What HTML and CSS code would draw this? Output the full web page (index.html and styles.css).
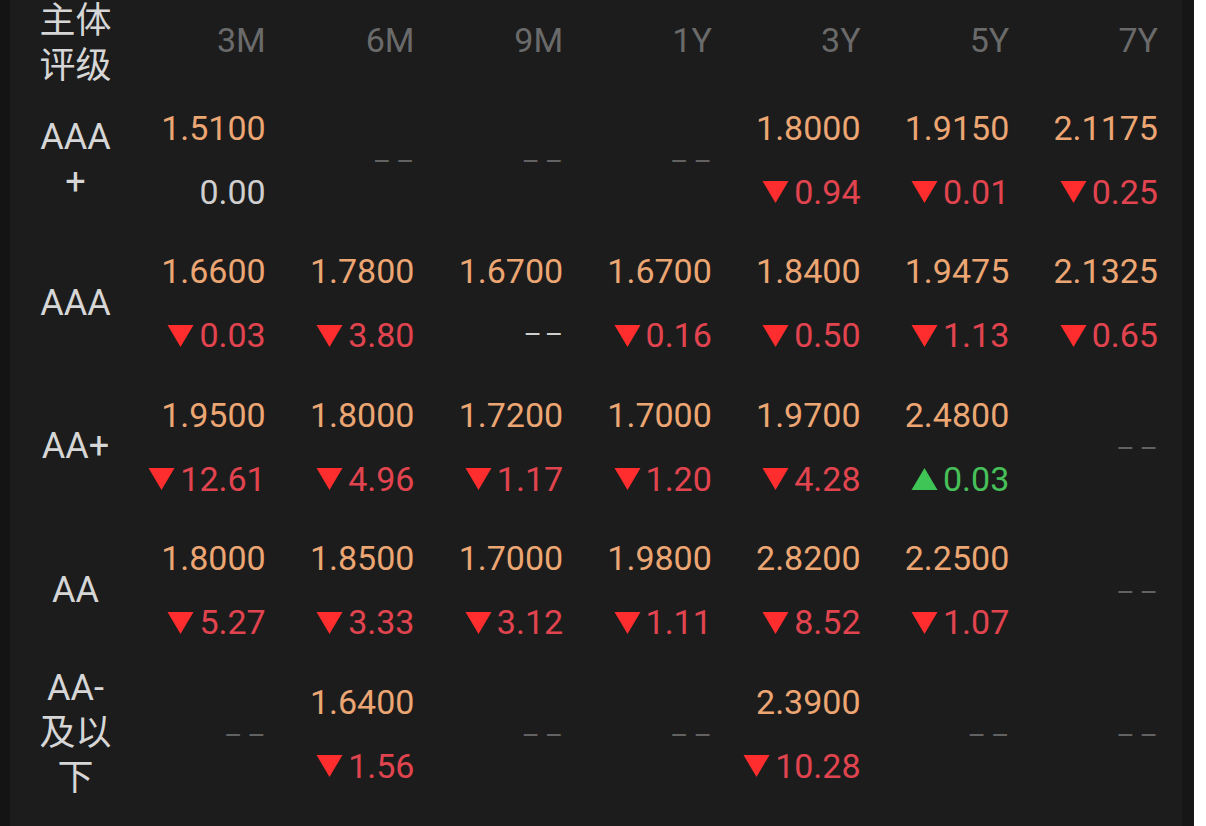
FILE: index.html
```html
<!DOCTYPE html>
<html lang="zh">
<head>
<meta charset="utf-8">
<title>主体评级收益率</title>
<link rel="stylesheet" href="styles.css">
</head>
<body>
<div class="page">
  <div class="edge-left"></div>
  <div class="panel">
    <div class="table">
      <div class="label head-label"><span>主体</span><span>评级</span></div>
      <div class="head">3M</div>
      <div class="head">6M</div>
      <div class="head">9M</div>
      <div class="head">1Y</div>
      <div class="head">3Y</div>
      <div class="head">5Y</div>
      <div class="head">7Y</div>

      <!-- AAA+ -->
      <div class="label"><span>AAA</span><span>+</span></div>
      <div class="cell"><span class="val">1.5100</span><span class="chg flat">0.00</span></div>
      <div class="cell"><span class="dash">––</span></div>
      <div class="cell"><span class="dash">––</span></div>
      <div class="cell"><span class="dash">––</span></div>
      <div class="cell"><span class="val">1.8000</span><span class="chg down"><svg class="tri" viewBox="0 0 26 22"><polygon points="0,0 26,0 13,22"/></svg>0.94</span></div>
      <div class="cell"><span class="val">1.9150</span><span class="chg down"><svg class="tri" viewBox="0 0 26 22"><polygon points="0,0 26,0 13,22"/></svg>0.01</span></div>
      <div class="cell"><span class="val">2.1175</span><span class="chg down"><svg class="tri" viewBox="0 0 26 22"><polygon points="0,0 26,0 13,22"/></svg>0.25</span></div>

      <!-- AAA -->
      <div class="label"><span>AAA</span></div>
      <div class="cell"><span class="val">1.6600</span><span class="chg down"><svg class="tri" viewBox="0 0 26 22"><polygon points="0,0 26,0 13,22"/></svg>0.03</span></div>
      <div class="cell"><span class="val">1.7800</span><span class="chg down"><svg class="tri" viewBox="0 0 26 22"><polygon points="0,0 26,0 13,22"/></svg>3.80</span></div>
      <div class="cell"><span class="val">1.6700</span><span class="chg nil"><span class="dash light">––</span></span></div>
      <div class="cell"><span class="val">1.6700</span><span class="chg down"><svg class="tri" viewBox="0 0 26 22"><polygon points="0,0 26,0 13,22"/></svg>0.16</span></div>
      <div class="cell"><span class="val">1.8400</span><span class="chg down"><svg class="tri" viewBox="0 0 26 22"><polygon points="0,0 26,0 13,22"/></svg>0.50</span></div>
      <div class="cell"><span class="val">1.9475</span><span class="chg down"><svg class="tri" viewBox="0 0 26 22"><polygon points="0,0 26,0 13,22"/></svg>1.13</span></div>
      <div class="cell"><span class="val">2.1325</span><span class="chg down"><svg class="tri" viewBox="0 0 26 22"><polygon points="0,0 26,0 13,22"/></svg>0.65</span></div>

      <!-- AA+ -->
      <div class="label"><span>AA+</span></div>
      <div class="cell"><span class="val">1.9500</span><span class="chg down"><svg class="tri" viewBox="0 0 26 22"><polygon points="0,0 26,0 13,22"/></svg>12.61</span></div>
      <div class="cell"><span class="val">1.8000</span><span class="chg down"><svg class="tri" viewBox="0 0 26 22"><polygon points="0,0 26,0 13,22"/></svg>4.96</span></div>
      <div class="cell"><span class="val">1.7200</span><span class="chg down"><svg class="tri" viewBox="0 0 26 22"><polygon points="0,0 26,0 13,22"/></svg>1.17</span></div>
      <div class="cell"><span class="val">1.7000</span><span class="chg down"><svg class="tri" viewBox="0 0 26 22"><polygon points="0,0 26,0 13,22"/></svg>1.20</span></div>
      <div class="cell"><span class="val">1.9700</span><span class="chg down"><svg class="tri" viewBox="0 0 26 22"><polygon points="0,0 26,0 13,22"/></svg>4.28</span></div>
      <div class="cell"><span class="val">2.4800</span><span class="chg up"><svg class="tri" viewBox="0 0 26 22"><polygon points="0,22 26,22 13,0"/></svg>0.03</span></div>
      <div class="cell"><span class="dash">––</span></div>

      <!-- AA -->
      <div class="label"><span>AA</span></div>
      <div class="cell"><span class="val">1.8000</span><span class="chg down"><svg class="tri" viewBox="0 0 26 22"><polygon points="0,0 26,0 13,22"/></svg>5.27</span></div>
      <div class="cell"><span class="val">1.8500</span><span class="chg down"><svg class="tri" viewBox="0 0 26 22"><polygon points="0,0 26,0 13,22"/></svg>3.33</span></div>
      <div class="cell"><span class="val">1.7000</span><span class="chg down"><svg class="tri" viewBox="0 0 26 22"><polygon points="0,0 26,0 13,22"/></svg>3.12</span></div>
      <div class="cell"><span class="val">1.9800</span><span class="chg down"><svg class="tri" viewBox="0 0 26 22"><polygon points="0,0 26,0 13,22"/></svg>1.11</span></div>
      <div class="cell"><span class="val">2.8200</span><span class="chg down"><svg class="tri" viewBox="0 0 26 22"><polygon points="0,0 26,0 13,22"/></svg>8.52</span></div>
      <div class="cell"><span class="val">2.2500</span><span class="chg down"><svg class="tri" viewBox="0 0 26 22"><polygon points="0,0 26,0 13,22"/></svg>1.07</span></div>
      <div class="cell"><span class="dash">––</span></div>

      <!-- AA- 及以下 -->
      <div class="label"><span>AA-</span><span>及以</span><span>下</span></div>
      <div class="cell"><span class="dash">––</span></div>
      <div class="cell"><span class="val">1.6400</span><span class="chg down"><svg class="tri" viewBox="0 0 26 22"><polygon points="0,0 26,0 13,22"/></svg>1.56</span></div>
      <div class="cell"><span class="dash">––</span></div>
      <div class="cell"><span class="dash">––</span></div>
      <div class="cell"><span class="val">2.3900</span><span class="chg down"><svg class="tri" viewBox="0 0 26 22"><polygon points="0,0 26,0 13,22"/></svg>10.28</span></div>
      <div class="cell"><span class="dash">––</span></div>
      <div class="cell"><span class="dash">––</span></div>
    </div>
  </div>
  <div class="edge-right"></div>
  <div class="outside"></div>
</div>
</body>
</html>
```

FILE: styles.css
```css
html, body {
  margin: 0;
  padding: 0;
  background: #ffffff;
}

.page {
  display: flex;
  width: 1206px;
  height: 826px;
  overflow: hidden;
  font-family: Roboto, "Noto Sans CJK SC", sans-serif;
}

.edge-left {
  width: 10px;
  background: #141414;
  flex: none;
}

.panel {
  width: 1172px;
  flex: none;
  background: #1c1c1c;
}

.edge-right {
  width: 12px;
  flex: none;
  background: #161616;
}

.outside {
  flex: 1;
  background: #ffffff;
}

.table {
  display: grid;
  grid-template-columns: 131px repeat(7, 1fr);
  grid-template-rows: 88px repeat(5, 143.5px);
}

.head {
  display: flex;
  align-items: center;
  justify-content: flex-end;
  padding: 0 24px 8px 0;
  font-size: 34px;
  color: #6a6a6a;
}

.label {
  display: flex;
  flex-direction: column;
  align-items: center;
  justify-content: center;
  font-family: Roboto, "Noto Sans CJK SC", sans-serif;
  font-size: 36px;
  line-height: 45px;
  color: #d6d6d6;
}

.label span {
  display: block;
  height: 45px;
}

.head-label {
  padding-bottom: 8px;
  font-family: "Noto Sans CJK SC", sans-serif;
}

.cell {
  display: flex;
  flex-direction: column;
  align-items: flex-end;
  justify-content: center;
  padding-right: 24px;
  font-size: 34px;
}

.val,
.chg {
  display: flex;
  align-items: center;
  justify-content: flex-end;
  height: 64px;
  line-height: 64px;
}

.val {
  color: #eca673;
}

.chg.flat {
  color: #cfcfcf;
}

.chg.down {
  color: #e2444f;
}

.chg.up {
  color: #47c05a;
}

.tri {
  width: 27px;
  height: 22px;
  margin-right: 5px;
  margin-top: 1px;
}

.chg.down .tri {
  fill: #ff2d2d;
}

.chg.up .tri {
  fill: #3fc456;
}

.dash {
  font-size: 28px;
  letter-spacing: 5px;
  margin-right: -5px;
  margin-top: 4px;
  color: #626262;
}

.dash.light {
  color: #cfcfcf;
  letter-spacing: 3px;
  margin-right: -3px;
  margin-top: 0;
}
```
